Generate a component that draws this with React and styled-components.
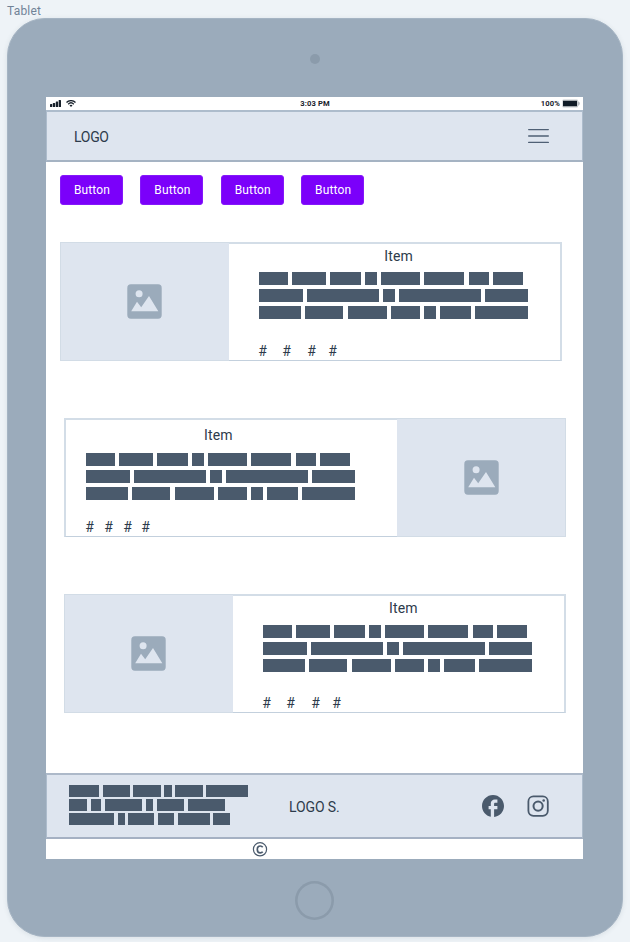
import React from "react";
import styled, { createGlobalStyle } from "styled-components";

const GlobalStyle = createGlobalStyle`
  * { box-sizing: border-box; }
  body {
    margin: 0;
    background: #eef3f7;
    font-family: Roboto, "Liberation Sans", sans-serif;
    color: #2d3b4b;
  }
`;

const Canvas = styled.div`
  width: 630px;
  height: 942px;
  overflow: hidden;
  padding-left: 7px;
`;

const FrameLabel = styled.div`
  height: 18px;
  padding-top: 3px;
  font-size: 12px;
  line-height: 16px;
  letter-spacing: 0.2px;
  color: #718397;
`;

const Tablet = styled.div`
  width: 615.5px;
  height: 919px;
  border-radius: 38px;
  background: #9babbb;
  border: 1px solid #a5b4c3;
  box-shadow: 0 1px 5px rgba(60, 80, 100, 0.12);
  display: flex;
  flex-direction: column;
  padding-left: 38px;
`;

const Camera = styled.div`
  width: 10px;
  height: 10px;
  border-radius: 50%;
  background: #8b9bab;
  margin: 35px 0 33px 263.5px;
`;

const HomeButton = styled.div`
  width: 39px;
  height: 39px;
  border-radius: 50%;
  box-shadow: inset 0 0 0 2.6px #8b9bab;
  margin: 21.5px 0 0 249px;
`;

const Screen = styled.main`
  width: 537px;
  height: 762px;
  background: #fff;
  display: flex;
  flex-direction: column;
`;

const StatusBar = styled.div`
  height: 13px;
  display: grid;
  grid-template-columns: 1fr auto 1fr;
  align-items: center;
  padding: 0 3px 0 4px;
  font-size: 7.6px;
  font-weight: 700;
  line-height: 13px;
  letter-spacing: 0.15px;
  color: #17202a;
`;

const StatusGroup = styled.div`
  display: flex;
  align-items: center;
  gap: ${(p) => p.$gap}px;
  justify-content: ${(p) => (p.$end ? "flex-end" : "flex-start")};
`;

const Header = styled.header`
  height: 52px;
  background: #dee5ef;
  border: 1px solid #adbccc;
  border-top: 2px solid #adbccc;
  border-bottom: 2px solid #a5b3c3;
  display: flex;
  align-items: center;
  justify-content: space-between;
  padding: 0 33px 0 27px;
`;

const Logo = styled.span`
  font-size: 14px;
  line-height: 16px;
  letter-spacing: ${(p) => p.$spacing || 0}px;
  padding-top: ${(p) => p.$top || 0}px;
`;

const ButtonRow = styled.nav`
  display: flex;
  gap: 17.4px;
  padding: 13px 0 0 14px;
`;

const Button = styled.button`
  width: 63px;
  height: 30px;
  border: 1px solid #8418fa;
  border-radius: 3px;
  background: #7b00fa;
  color: #fff;
  padding: 0 0 0 1px;
  font: 400 12px/16px Roboto, "Liberation Sans", sans-serif;
  letter-spacing: 0.15px;
`;

const CardList = styled.section`
  flex: 1;
  display: flex;
  flex-direction: column;
  gap: 57px;
  padding-top: 37px;
`;

const Card = styled.article`
  width: 502px;
  height: 119px;
  flex: none;
  display: flex;
  flex-direction: ${(p) => (p.$reverse ? "row-reverse" : "row")};
  margin-left: ${(p) => p.$left}px;
`;

const Picture = styled.div`
  width: 169px;
  background: #dee5ef;
  border: 1px solid #d2dce6;
  border-${(p) => (p.$reverse ? "left" : "right")}: 0;
  display: flex;
  align-items: center;
  justify-content: center;
  padding-right: ${(p) => (p.$reverse ? 0 : 0.6)}px;
`;

const CardBody = styled.div`
  flex: 1;
  border: 2px solid #d3dde7;
  border-bottom: 1.5px solid #c3d0dd;
  border-${(p) => (p.$reverse ? "right" : "left")}: 0;
  padding-left: ${(p) => (p.$reverse ? 20 : 30)}px;
`;

const CardTitle = styled.h2`
  font-size: 14px;
  font-weight: 400;
  line-height: 16px;
  letter-spacing: 0.15px;
  margin: ${(p) => p.$top}px 0 0 ${(p) => p.$left}px;
`;

const Lines = styled.div`
  display: flex;
  flex-direction: column;
  gap: ${(p) => p.$rowGap}px;
  margin-top: ${(p) => p.$top || 0}px;
`;

const Line = styled.div`
  display: flex;
  gap: ${(p) => p.$gap}px;
  height: ${(p) => p.$height}px;
`;

const Word = styled.span`
  width: ${(p) => p.$w}px;
  background: #4a5a6c;
`;

const Tags = styled.div`
  display: flex;
  font-size: 14px;
  line-height: 16px;
  margin: ${(p) => p.$top}px 0 0 -0.8px;
`;

const Tag = styled.span`
  width: ${(p) => p.$w}px;
`;

const Footer = styled.footer`
  height: 66px;
  background: #dee5ef;
  border: 1px solid #adbccc;
  border-top: 2px solid #adb9c9;
  border-bottom: 2px solid #a5b1c3;
  display: grid;
  grid-template-columns: 220px 193px auto;
  padding: 10px 0 0 22px;
`;

const FooterLogo = styled.div`
  padding-top: 12px;
`;

const Social = styled.div`
  display: flex;
  gap: 23px;
  padding-top: 10px;
`;

const Copyright = styled.div`
  height: 20px;
  padding: 3px 0 0 206px;
  display: flex;
`;

const cardWords = [
  [28.8, 34.2, 30.7, 12, 39.3, 40, 20.7, 30],
  [43.5, 72.4, 12, 81.7, 43],
  [42, 38.4, 39, 29.4, 12, 30.3, 53.7],
];

const footerWords = [
  [30.4, 27, 27.5, 7.2, 27.6, 41.5],
  [18.4, 10.2, 37.8, 7.4, 27.5, 37.3],
  [45.3, 7.2, 26, 16.4, 32, 16.4],
];

const cards = [
  { left: 14, titleTop: 4, titleLeft: 125.3, linesTop: 8, tagsTop: 24, tags: [24, 25, 21, 10] },
  { left: 18, titleTop: 7, titleLeft: 118, linesTop: 10, tagsTop: 19, tags: [19, 19, 18, 10], reverse: true },
  { left: 18, titleTop: 4, titleLeft: 126, linesTop: 9, tagsTop: 23, tags: [24, 25, 21, 10] },
];

function Paragraph({ rows, gap, height, rowGap, top }) {
  return (
    <Lines $rowGap={rowGap} $top={top}>
      {rows.map((row, i) => (
        <Line key={i} $gap={gap} $height={height}>
          {row.map((w, j) => (
            <Word key={j} $w={w} />
          ))}
        </Line>
      ))}
    </Lines>
  );
}

function SignalIcon() {
  return (
    <svg width="11" height="7" viewBox="0 0 11 7" fill="#17202a">
      <rect x="0" y="4" width="2.3" height="3" rx=".5" />
      <rect x="2.9" y="3" width="2.3" height="4" rx=".5" />
      <rect x="5.8" y="1.5" width="2.3" height="5.5" rx=".5" />
      <rect x="8.7" y="0" width="2.3" height="7" rx=".5" />
    </svg>
  );
}

function WifiIcon() {
  return (
    <svg width="10" height="7" viewBox="0 0 10 7" fill="none" stroke="#17202a" strokeWidth="1.3">
      <path d="M.5 2.5C3 0 7 0 9.5 2.5M2.2 4.2c1.6-1.6 4-1.6 5.6 0" />
      <path d="M3.5 5.3 5 6.9l1.5-1.6c-.9-.8-2.1-.8-3 0z" fill="#17202a" stroke="none" />
    </svg>
  );
}

function BatteryIcon() {
  return (
    <svg width="18" height="9" viewBox="0 0 18 9">
      <rect x=".4" y=".4" width="15.6" height="8.2" rx="1.3" fill="#c8cccf" />
      <path d="M16 2.2c2.4.8 2.4 3.8 0 4.6z" fill="#b6bcc1" />
      <rect x="1" y="1.8" width="14" height="5.4" fill="#101b26" />
    </svg>
  );
}

function MenuIcon() {
  return (
    <svg width="21" height="16" viewBox="0 0 21 16" stroke="#4f6075" strokeWidth="1.4" strokeLinecap="round">
      <path d="M.7 1.6h19.6M.7 8h19.6M.7 14.4h19.6" />
    </svg>
  );
}

function PictureIcon() {
  return (
    <svg width="35" height="35" viewBox="0 0 35 35">
      <rect x=".3" y=".3" width="34.4" height="34.4" rx="3.6" fill="#9babbb" />
      <circle cx="12.1" cy="9.8" r="3.5" fill="#dee5ef" />
      <path d="M4.2 27.2 10 17.8l4.2 5.5 7.8-11.3 9.3 15.2z" fill="#dee5ef" />
    </svg>
  );
}

function FacebookIcon() {
  return (
    <svg width="22" height="22" viewBox="2 2 20 20">
      <path
        fill="#4a5a6c"
        d="M22 12c0-5.52-4.48-10-10-10S2 6.48 2 12c0 4.84 3.44 8.87 8 9.8V15H8v-3h2V9.5C10 7.57 11.57 6 13.5 6H16v3h-2c-.55 0-1 .45-1 1v2h3v3h-3v6.95c5.05-.5 9-4.76 9-9.95z"
      />
    </svg>
  );
}

function InstagramIcon() {
  return (
    <svg width="22" height="22" viewBox="0 0 22 22" fill="none" stroke="#4a5a6c" strokeWidth="1.8">
      <rect x="1.4" y="1.4" width="19.4" height="19.4" rx="5" />
      <circle cx="11.1" cy="11.1" r="4.6" strokeWidth="2" />
      <circle cx="16.7" cy="5.5" r="1.3" fill="#4a5a6c" stroke="none" />
    </svg>
  );
}

function CopyrightIcon() {
  return (
    <svg width="16" height="15" viewBox="0 0 16 15" fill="none" stroke="#4a5a6c">
      <circle cx="8" cy="7.3" r="6.6" strokeWidth="1.2" />
      <path d="M10.7 5.2C10.1 4.3 9.3 4 8.3 4 6.4 4 5.3 5.2 5.3 7.4s1.1 3.4 3 3.4c1 0 1.8-.3 2.4-1.1" strokeWidth="1.7" />
    </svg>
  );
}

export default function App() {
  return (
    <Canvas>
      <GlobalStyle />
      <FrameLabel>Tablet</FrameLabel>
      <Tablet>
        <Camera />
        <Screen>
          <StatusBar>
            <StatusGroup $gap={5}>
              <SignalIcon />
              <WifiIcon />
            </StatusGroup>
            <span>3:03 PM</span>
            <StatusGroup $gap={2} $end>
              <span>100%</span>
              <BatteryIcon />
            </StatusGroup>
          </StatusBar>
          <Header>
            <Logo $spacing={-0.3} $top={2}>LOGO</Logo>
            <MenuIcon />
          </Header>
          <ButtonRow>
            {[0, 1, 2, 3].map((i) => (
              <Button key={i}>Button</Button>
            ))}
          </ButtonRow>
          <CardList>
            {cards.map((card, i) => (
              <Card key={i} $left={card.left} $reverse={card.reverse}>
                <Picture $reverse={card.reverse}>
                  <PictureIcon />
                </Picture>
                <CardBody $reverse={card.reverse}>
                  <CardTitle $top={card.titleTop} $left={card.titleLeft}>
                    Item
                  </CardTitle>
                  <Paragraph rows={cardWords} gap={4.1} height={13.4} rowGap={3.5} top={card.linesTop} />
                  <Tags $top={card.tagsTop}>
                    {card.tags.map((w, j) => (
                      <Tag key={j} $w={w}>
                        #
                      </Tag>
                    ))}
                  </Tags>
                </CardBody>
              </Card>
            ))}
          </CardList>
          <Footer>
            <Paragraph rows={footerWords} gap={3.5} height={11.7} rowGap={2.3} />
            <FooterLogo>
              <Logo $spacing={-0.1}>LOGO S.</Logo>
            </FooterLogo>
            <Social>
              <FacebookIcon />
              <InstagramIcon />
            </Social>
          </Footer>
          <Copyright>
            <CopyrightIcon />
          </Copyright>
        </Screen>
        <HomeButton />
      </Tablet>
    </Canvas>
  );
}
